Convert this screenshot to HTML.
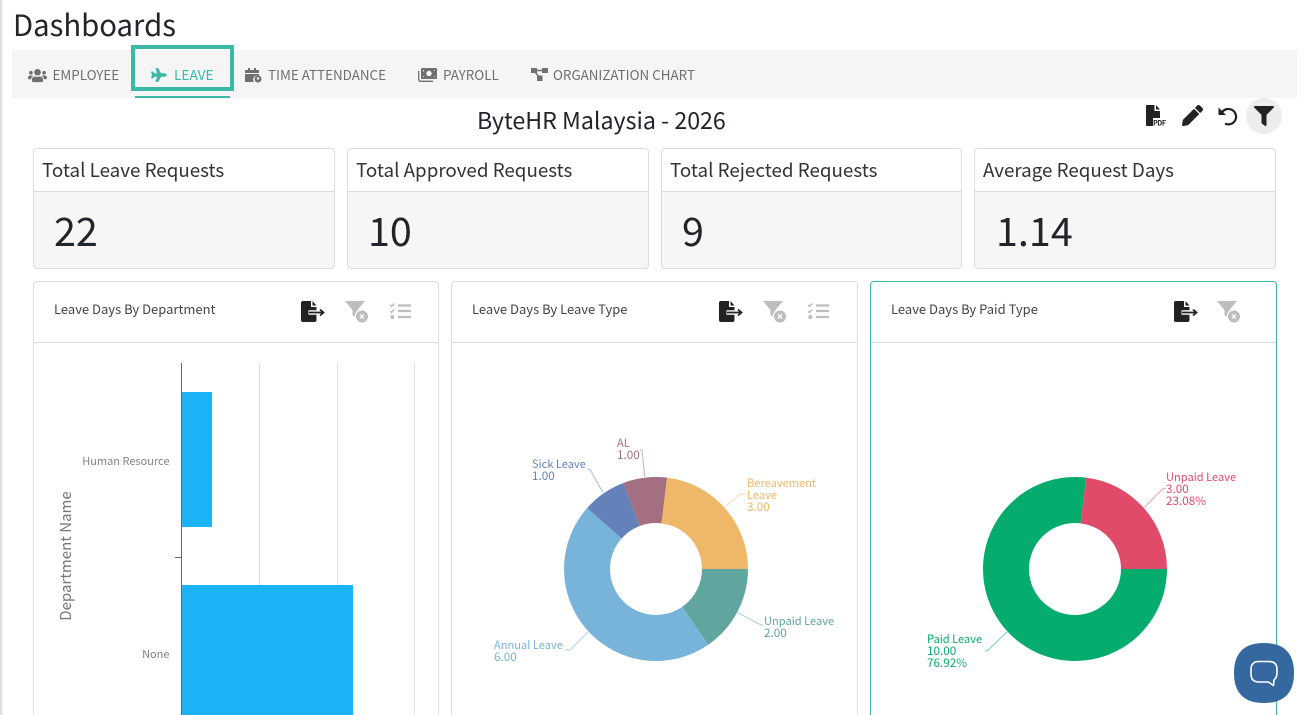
<!DOCTYPE html>
<html lang="en">
<head>
<meta charset="utf-8">
<title>Dashboards</title>
<style>
html,body{margin:0;padding:0;width:1304px;height:715px;overflow:hidden;background:#fff}
body{position:relative;font-family:"Noto Sans CJK JP","Liberation Sans",sans-serif;color:#212529}
.a{position:absolute;white-space:nowrap}
.shadow{left:0;top:0;width:4px;height:715px;background:linear-gradient(90deg,#d4d4d4,#f4f4f4 70%,#fff)}
.bar{left:12px;top:50px;width:1285px;height:48px;background:#f5f5f5}
.tab{top:65px;font-size:13.4px;line-height:18px;color:#6f6f6f}
.card{box-sizing:border-box;top:148px;height:121px;border:1px solid #dcdcdc;border-radius:4px;background:#f6f6f6;overflow:hidden}
.card .h{position:absolute;left:0;top:0;right:0;height:43px;box-sizing:border-box;background:#fff;border-bottom:1px solid #dcdcdc;padding-left:8px;font-size:18.8px;line-height:42px;color:#333;white-space:nowrap}
.card .v{position:absolute;left:20px;top:54px;font-size:39.500px;line-height:54px;color:#212529}
.panel{box-sizing:border-box;top:281px;height:460px;border:1px solid #dcdcdc;border-radius:4px;background:#fff}
.panel .h{position:absolute;left:0;top:0;right:0;height:61px;box-sizing:border-box;border-bottom:1px solid #dcdcdc;padding-left:20px;font-size:13px;line-height:53px;color:#444;white-space:nowrap}
svg.i{position:absolute;display:block}
svg text{font-family:"Noto Sans CJK JP","Liberation Sans",sans-serif}
.n{font-size:11.700px}
</style>
</head>
<body>
<svg width="0" height="0" style="position:absolute">
<symbol id="export" viewBox="0 0 24 21"><path d="M2 0h8v6h5.500v13a2 2 0 0 1-2 2H2a2 2 0 0 1-2-2V2a2 2 0 0 1 2-2zM11.500 0 15.500 4.500h-4z" fill="#222"/><path d="M7.500 11.500H24" stroke="#fff" stroke-width="4.500"/><path d="M8 11.500h14M19 8.500l3.500 3-3.500 3" fill="none" stroke="#222" stroke-width="1.800"/></symbol>
<symbol id="funnel" viewBox="0 0 24 22"><path d="M0 0h20l-7.500 9v8l-5-3V9z" fill="#bdbdbd"/><circle cx="17" cy="15" r="7" fill="#fff"/><circle cx="17" cy="15.500" r="6" fill="#bdbdbd"/><path d="M15 13.500l4 4M19 13.500l-4 4" stroke="#fff" stroke-width="1.300"/></symbol>
<symbol id="checks" viewBox="0 0 21 16"><path d="M0 2l1.500 1.500L4.500 0.500M0 8l1.500 1.500L4.500 6.500" fill="none" stroke="#bdbdbd" stroke-width="1.500"/><circle cx="2.300" cy="14" r="2" fill="#bdbdbd"/><path d="M8 2.500h13M8 8h13M8 14h13" stroke="#bdbdbd" stroke-width="2.200"/></symbol>
</svg>

<div class="a shadow"></div>
<div class="a" style="left:13px;top:4px;font-size:29.300px;line-height:40px;color:#212529">Dashboards</div>

<div class="a bar"></div>
<div class="a" style="left:131px;top:45px;width:103px;height:46px;box-sizing:border-box;border:4px solid #3ab9a7"></div>
<div class="a" style="left:135px;top:96px;width:95px;height:2px;background:#3ab9a7"></div>

<svg class="i" style="left:28px;top:68px" width="19" height="15" viewBox="0 0 640 512"><path fill="#6f6f6f" d="M96 224c35.300 0 64-28.700 64-64s-28.700-64-64-64-64 28.700-64 64 28.700 64 64 64zm448 0c35.300 0 64-28.700 64-64s-28.700-64-64-64-64 28.700-64 64 28.700 64 64 64zm32 32h-64c-17.600 0-33.500 7.100-45.100 18.600 40.300 22.100 68.900 62 75.100 109.400h66c17.700 0 32-14.300 32-32v-32c0-35.300-28.700-64-64-64zm-256 0c61.900 0 112-50.100 112-112S381.900 32 320 32 208 82.100 208 144s50.100 112 112 112zm76.800 32h-8.300c-20.800 10-43.900 16-68.500 16s-47.600-6-68.500-16h-8.300C179.600 288 128 339.600 128 403.200V432c0 26.500 21.500 48 48 48h288c26.500 0 48-21.500 48-48v-28.800c0-63.600-51.600-115.200-115.200-115.200zm-223.700-13.400C161.500 263.100 145.600 256 128 256H64c-35.300 0-64 28.700-64 64v32c0 17.700 14.300 32 32 32h65.900c6.300-47.400 34.900-87.300 75.200-109.400z"/></svg>
<div class="a tab" style="left:52.500px">EMPLOYEE</div>

<svg class="i" style="left:151px;top:68px" width="16" height="14" viewBox="0 0 576 512"><path fill="#3ab9a7" d="M480 192H365.710L260.610 8.060A16.014 16.014 0 0 0 246.710 0h-65.500c-10.630 0-18.300 10.170-15.380 20.390L214.860 192H112l-43.200-57.600c-3.020-4.030-7.770-6.400-12.800-6.400H16.010C5.600 128-2.040 137.780.49 147.880L32 256 .49 364.120C-2.040 374.220 5.600 384 16.010 384H56c5.040 0 9.780-2.370 12.800-6.400L112 320h102.860l-49.030 171.600c-2.920 10.220 4.750 20.400 15.380 20.400h65.500c5.740 0 11.040-3.080 13.890-8.060L365.710 320H480c35.350 0 96-28.650 96-64s-60.650-64-96-64z"/></svg>
<div class="a tab" style="left:174px;color:#3ab9a7;font-size:13.700px">LEAVE</div>

<svg class="i" style="left:245px;top:68px" width="17" height="15" viewBox="0 0 17 15"><path fill="#6f6f6f" d="M3 0h2v2h4V0h2v2h2a1 1 0 0 1 1 1v2H0V3a1 1 0 0 1 1-1h2zM0 6h14v2a4 4 0 0 0-5 6H1a1 1 0 0 1-1-1z"/><circle cx="13" cy="11" r="3.500" fill="#6f6f6f"/><circle cx="13" cy="10.500" r="1.200" fill="#f5f5f5"/></svg>
<div class="a tab" style="left:268px">TIME ATTENDANCE</div>

<svg class="i" style="left:418px;top:68px" width="19" height="14" viewBox="0 0 19 14"><path fill="none" stroke="#6f6f6f" stroke-width="1.300" d="M.7 3v8.500a1.800 1.800 0 0 0 1.800 1.800H15"/><path fill="#6f6f6f" fill-rule="evenodd" d="M4 0h14a1 1 0 0 1 1 1v9a1 1 0 0 1-1 1H4a1 1 0 0 1-1-1V1a1 1 0 0 1 1-1zm7 2.800a2.700 2.700 0 1 0 0 5.400 2.700 2.700 0 0 0 0-5.400zM5 2v2a2 2 0 0 0 1-2zm0 7h1a1 1 0 0 0-1-1zm12-7h-1a1 1 0 0 0 1 1zm0 7V8a1 1 0 0 0-1 1z"/></svg>
<div class="a tab" style="left:443px">PAYROLL</div>

<svg class="i" style="left:531px;top:68px" width="17" height="13" viewBox="0 0 17 13"><path fill="#6f6f6f" d="M0 0h6v5H0zM11 0h6v5h-6zM6 7.500h5.500V13H6z"/><path d="M5 2.500h7M4 4l4 5" stroke="#6f6f6f" stroke-width="1.500" fill="none"/></svg>
<div class="a tab" style="left:553px">ORGANIZATION CHART</div>

<div class="a" style="left:477px;top:101px;font-size:23.200px;line-height:36px;color:#212529">ByteHR Malaysia - 2026</div>

<svg class="i" style="left:1146px;top:105px" width="21" height="22" viewBox="0 0 21 22"><path fill="#222" d="M1 0h7.500v6H14v7H7v8H1a1 1 0 0 1-1-1V1a1 1 0 0 1 1-1zM10 0l4 4.500h-4z"/><text x="7" y="20.500" font-size="7" font-weight="700" fill="#222" textLength="13">PDF</text></svg>
<svg class="i" style="left:1182px;top:105px" width="21" height="21" viewBox="0 0 512 512"><path fill="#222" d="M497.900 142.100l-46.100 46.100c-4.700 4.700-12.300 4.700-17 0l-111-111c-4.700-4.700-4.700-12.300 0-17l46.100-46.100c18.700-18.700 49.100-18.700 67.900 0l60.100 60.100c18.800 18.700 18.800 49.100 0 67.900zM284.200 99.800L21.600 362.400.4 483.900c-2.900 16.400 11.400 30.600 27.800 27.800l121.500-21.300 262.600-262.600c4.700-4.700 4.700-12.300 0-17l-111-111c-4.800-4.700-12.400-4.700-17.100 0z"/></svg>
<svg class="i" style="left:1217px;top:106px" width="21" height="20" viewBox="0 0 21 20"><path fill="none" stroke="#222" stroke-width="2.200" d="M5 6.300A7.700 7.700 0 1 1 8 17.600"/><path fill="#222" d="M1.500 1.500v7.500H9z"/></svg>
<div class="a" style="left:1246px;top:98px;width:36px;height:36px;border-radius:50%;background:#ececec"></div>
<svg class="i" style="left:1254px;top:106px" width="20" height="20" viewBox="0 0 512 512"><path fill="#222" d="M487.976 0H24.028C2.710 0-8.047 25.866 7.058 40.971L192 225.941V432c0 7.831 3.821 15.170 10.237 19.662l80 55.980C298.020 518.690 320 507.493 320 487.980V225.941l184.947-184.970C520.021 25.896 509.338 0 487.976 0z"/></svg>

<div class="a card" style="left:33px;width:302px"><div class="h">Total Leave Requests</div><div class="v">22</div></div>
<div class="a card" style="left:347px;width:302px"><div class="h">Total Approved Requests</div><div class="v">10</div></div>
<div class="a card" style="left:661px;width:301px"><div class="h">Total Rejected Requests</div><div class="v">9</div></div>
<div class="a card" style="left:974px;width:302px"><div class="h">Average Request Days</div><div class="v" style="left:21px">1.14</div></div>

<div class="a panel" style="left:33px;width:406px"><div class="h">Leave Days By Department</div></div>
<div class="a panel" style="left:451px;width:407px"><div class="h">Leave Days By Leave Type</div></div>
<div class="a panel" style="left:870px;width:407px;border-color:#3ab9a7"><div class="h" style="border-bottom-color:#dcdcdc">Leave Days By Paid Type</div></div>

<svg class="i" style="left:301px;top:301px" width="24" height="21"><use href="#export"/></svg>
<svg class="i" style="left:345px;top:301px" width="24" height="22"><use href="#funnel"/></svg>
<svg class="i" style="left:390px;top:303px" width="21" height="16"><use href="#checks"/></svg>
<svg class="i" style="left:719px;top:301px" width="24" height="21"><use href="#export"/></svg>
<svg class="i" style="left:763px;top:301px" width="24" height="22"><use href="#funnel"/></svg>
<svg class="i" style="left:808px;top:303px" width="21" height="16"><use href="#checks"/></svg>
<svg class="i" style="left:1174px;top:301px" width="24" height="21"><use href="#export"/></svg>
<svg class="i" style="left:1217px;top:301px" width="24" height="22"><use href="#funnel"/></svg>

<svg class="a" style="left:0;top:0" width="1304" height="715" viewBox="0 0 1304 715">
  <!-- bar chart -->
  <path d="M259.500 363V715M337.500 363V715M414.500 363V715" stroke="#dedede" stroke-width="1" fill="none"/>
  <rect x="182" y="392" width="30" height="135" fill="#1cb2f6"/>
  <rect x="182" y="585" width="171" height="130" fill="#1cb2f6"/>
  <path d="M181.500 363V715M175 557.500H181" stroke="#666" stroke-width="1" fill="none"/>
  <text x="169.500" y="465" font-size="11" text-anchor="end" fill="#808080">Human Resource</text>
  <text x="169.500" y="658" font-size="11" text-anchor="end" fill="#808080">None</text>
  <text transform="translate(71 556) rotate(-90)" font-size="15" text-anchor="middle" fill="#777">Department Name</text>

  <!-- leave type donut -->
  <path fill="#60a69f" d="M748 569A92 92 0 0 1 708.260 644.720L682.130 606.860A46 46 0 0 0 702 569Z"/>
  <path fill="#78b3d9" d="M708.260 644.720A92 92 0 0 1 587.140 507.990L621.570 538.500A46 46 0 0 0 682.130 606.860Z"/>
  <path fill="#6581b9" d="M587.140 507.990A92 92 0 0 1 623.380 482.980L639.690 525.990A46 46 0 0 0 621.570 538.500Z"/>
  <path fill="#a46f80" d="M623.380 482.980A92 92 0 0 1 667.090 477.670L661.540 523.340A46 46 0 0 0 639.690 525.990Z"/>
  <path fill="#eeb868" d="M667.090 477.670A92 92 0 0 1 748 569L702 569A46 46 0 0 0 661.540 523.340Z"/>
  <g fill="none" stroke-width="1" opacity=".55">
    <path stroke="#eeb868" d="M725 506.700L740 494H746"/>
    <path stroke="#60a69f" d="M737.700 612.700L761 625H763"/>
    <path stroke="#78b3d9" d="M588.300 631.700L570 650H565"/>
    <path stroke="#6581b9" d="M602.700 492.300L590 469.300H586.700"/>
    <path stroke="#a46f80" d="M644.700 476.700L642 450H640"/>
  </g>
  <g font-size="11.100">
    <g fill="#eeb868"><text x="747" y="487">Bereavement</text><text x="747" y="499">Leave</text><text class="n" x="747" y="511">3.00</text></g>
    <g fill="#60a69f"><text x="764" y="625">Unpaid Leave</text><text class="n" x="764" y="637">2.00</text></g>
    <g fill="#78b3d9"><text x="494" y="649">Annual Leave</text><text class="n" x="494" y="661">6.00</text></g>
    <g fill="#6581b9"><text x="532" y="468">Sick Leave</text><text class="n" x="532" y="480">1.00</text></g>
    <g fill="#a46f80"><text x="617" y="447">AL</text><text class="n" x="617" y="459">1.00</text></g>
  </g>

  <!-- paid type donut -->
  <path fill="#06ab6e" d="M1167 569A92 92 0 1 1 1086.090 477.670L1080.540 523.340A46 46 0 1 0 1121 569Z"/>
  <path fill="#df4b68" d="M1086.090 477.670A92 92 0 0 1 1167 569L1121 569A46 46 0 0 0 1080.540 523.340Z"/>
  <g fill="none" stroke-width="1" opacity=".55">
    <path stroke="#df4b68" d="M1144.300 507.300L1163.300 488.300H1166"/>
    <path stroke="#06ab6e" d="M1007.300 631.700L987.300 650.700H985"/>
  </g>
  <g font-size="11.100">
    <g fill="#df4b68"><text x="1166" y="481">Unpaid Leave</text><text class="n" x="1166" y="493">3.00</text><text class="n" x="1166" y="505">23.08%</text></g>
    <g fill="#06ab6e"><text x="927" y="643">Paid Leave</text><text class="n" x="927" y="655">10.00</text><text class="n" x="927" y="667">76.92%</text></g>
  </g>
</svg>

<svg class="i" style="left:1234px;top:643px" width="60" height="60" viewBox="0 0 60 60">
  <path fill="#34689f" d="M30 0C50 0 60 10 60 30S50 60 30 60 0 50 0 30 10 0 30 0z"/>
  <path fill="none" stroke="#fff" stroke-width="1.600" stroke-linejoin="round" d="M25 18.500h10c5.500 0 8 3 8 8v3c0 3.500-1 6-3 7.500l-.5 5.500-5-3.500H25c-5.500 0-8-3-8-8v-4.500c0-5 2.500-8 8-8z"/>
</svg>
</body>
</html>
